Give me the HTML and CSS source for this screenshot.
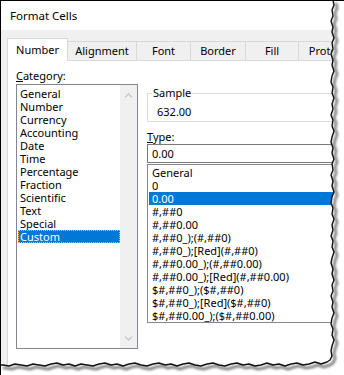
FILE: index.html
```html
<html>
<head>
<link rel="stylesheet" href="styles.css">
<title>Format Cells</title>
</head>
<body>
<div class="window">
  <div class="titlebar">Format Cells</div>
  <div class="tabs">
    <div class="tab active w-number">Number</div>
    <div class="tab w-align">Alignment</div>
    <div class="tab w-font">Font</div>
    <div class="tab w-border">Border</div>
    <div class="tab w-fill">Fill</div>
    <div class="tab w-prot">Protection</div>
  </div>
  <div class="page">
    <div class="left">
      <div class="label"><u>C</u>ategory:</div>
      <div class="listbox category">
        <div class="items">
          <div class="item">General</div>
          <div class="item">Number</div>
          <div class="item">Currency</div>
          <div class="item">Accounting</div>
          <div class="item">Date</div>
          <div class="item">Time</div>
          <div class="item">Percentage</div>
          <div class="item">Fraction</div>
          <div class="item">Scientific</div>
          <div class="item">Text</div>
          <div class="item">Special</div>
          <div class="item sel focus">Custom</div>
        </div>
        <div class="scrollbar">
          <svg width="9" height="5" viewBox="0 0 9 5"><polyline points="1,4.5 4.5,1 8,4.5" fill="none" stroke="#c8c8c8" stroke-width="1.3"/></svg>
          <svg width="9" height="5" viewBox="0 0 9 5"><polyline points="1,0.5 4.5,4 8,0.5" fill="none" stroke="#c8c8c8" stroke-width="1.3"/></svg>
        </div>
      </div>
    </div>
    <div class="right">
      <fieldset class="sample">
        <legend>Sample</legend>
        <div class="sample-value">632.00</div>
      </fieldset>
      <div class="type-label"><u>T</u>ype:</div>
      <div class="textbox">0.00</div>
      <div class="listbox formats">
        <div class="item">General</div>
        <div class="item">0</div>
        <div class="item sel">0.00</div>
        <div class="item">#,##0</div>
        <div class="item">#,##0.00</div>
        <div class="item">#,##0_);(#,##0)</div>
        <div class="item">#,##0_);[Red](#,##0)</div>
        <div class="item">#,##0.00_);(#,##0.00)</div>
        <div class="item">#,##0.00_);[Red](#,##0.00)</div>
        <div class="item">$#,##0_);($#,##0)</div>
        <div class="item">$#,##0_);[Red]($#,##0)</div>
        <div class="item">$#,##0.00_);($#,##0.00)</div>
      </div>
    </div>
  </div>

  <!-- torn paper edge laid over the right and bottom of the dialog -->
  <svg class="torn" width="344" height="375" viewBox="0 0 344 375">
    <defs>
      <filter id="soft" x="-10%" y="-10%" width="120%" height="120%"><feGaussianBlur stdDeviation="1.3"/></filter>
    </defs>
    <path fill="#fff" d="M333,0 L334,5 332,10 333,16 331,21 333,27 332,32 334,38 332,43 333,49 331,54 333,60 332,65 334,71 332,76 331,82 333,87 332,93 334,98 332,104 333,109 331,115 333,120 332,126 334,131 332,137 331,142 333,148 332,153 334,159 332,164 333,170 331,175 333,181 332,186 334,192 332,197 331,203 333,208 332,214 334,219 332,225 333,230 331,236 333,241 332,247 334,252 332,258 331,263 333,269 332,274 334,280 332,285 333,291 331,296 333,302 332,307 334,313 332,318 331,324 333,329 332,335 334,340 332,346 331,351 332,356 330,360 327,362 321,364 315,362 309,364 303,365 297,363 291,364 285,366 279,364 273,365 267,363 261,365 255,366 249,364 243,365 237,363 231,364 225,366 219,365 213,363 207,364 201,366 195,365 189,363 183,364 177,366 171,364 165,365 159,363 153,364 147,366 141,365 135,363 129,364 123,366 117,364 111,365 105,363 99,364 93,366 87,365 81,364 75,366 69,364 63,365 57,363 51,364 45,366 39,365 33,364 27,366 21,365 15,364 9,366 3,365 0,365 L0,375 L344,375 L344,0 Z"/>
    <g fill="none" stroke-linejoin="round">
      <polyline class="edge-shadow" filter="url(#soft)" transform="translate(3,3)" points="333,0 334,5 332,10 333,16 331,21 333,27 332,32 334,38 332,43 333,49 331,54 333,60 332,65 334,71 332,76 331,82 333,87 332,93 334,98 332,104 333,109 331,115 333,120 332,126 334,131 332,137 331,142 333,148 332,153 334,159 332,164 333,170 331,175 333,181 332,186 334,192 332,197 331,203 333,208 332,214 334,219 332,225 333,230 331,236 333,241 332,247 334,252 332,258 331,263 333,269 332,274 334,280 332,285 333,291 331,296 333,302 332,307 334,313 332,318 331,324 333,329 332,335 334,340 332,346 331,351 332,356 330,360 327,362 321,364 315,362 309,364 303,365 297,363 291,364 285,366 279,364 273,365 267,363 261,365 255,366 249,364 243,365 237,363 231,364 225,366 219,365 213,363 207,364 201,366 195,365 189,363 183,364 177,366 171,364 165,365 159,363 153,364 147,366 141,365 135,363 129,364 123,366 117,364 111,365 105,363 99,364 93,366 87,365 81,364 75,366 69,364 63,365 57,363 51,364 45,366 39,365 33,364 27,366 21,365 15,364 9,366 3,365 0,365"/>
      <polyline class="edge" points="333,0 334,5 332,10 333,16 331,21 333,27 332,32 334,38 332,43 333,49 331,54 333,60 332,65 334,71 332,76 331,82 333,87 332,93 334,98 332,104 333,109 331,115 333,120 332,126 334,131 332,137 331,142 333,148 332,153 334,159 332,164 333,170 331,175 333,181 332,186 334,192 332,197 331,203 333,208 332,214 334,219 332,225 333,230 331,236 333,241 332,247 334,252 332,258 331,263 333,269 332,274 334,280 332,285 333,291 331,296 333,302 332,307 334,313 332,318 331,324 333,329 332,335 334,340 332,346 331,351 332,356 330,360 327,362 321,364 315,362 309,364 303,365 297,363 291,364 285,366 279,364 273,365 267,363 261,365 255,366 249,364 243,365 237,363 231,364 225,366 219,365 213,363 207,364 201,366 195,365 189,363 183,364 177,366 171,364 165,365 159,363 153,364 147,366 141,365 135,363 129,364 123,366 117,364 111,365 105,363 99,364 93,366 87,365 81,364 75,366 69,364 63,365 57,363 51,364 45,366 39,365 33,364 27,366 21,365 15,364 9,366 3,365 0,365"/>
    </g>
  </svg>
</div>
</body>
</html>
```

FILE: styles.css
```css
body {
  margin: 0;
  background: #fff;
  color: #000;
  font-family: "Noto Sans", "Open Sans", sans-serif;
  font-size: 11px;
}

.window {
  position: relative;
  width: 344px;
  height: 375px;
  box-sizing: border-box;
  overflow: hidden;
  background: #f0f0f0;
  border-top: 1px solid #000;
  border-left: 1px solid #000;
}

.titlebar {
  height: 29px;
  line-height: 29px;
  padding-left: 9px;
  background: #fff;
  font-size: 11.5px;
}

/* tab strip */
.tabs {
  display: flex;
  align-items: flex-end;
  height: 22px;
  margin: 8px 0 0 6px;
}
.tab {
  flex: none;
  box-sizing: border-box;
  height: 19px;
  line-height: 18px;
  margin-left: -1px;
  text-align: center;
  white-space: nowrap;
  background: #f0f0f0;
  border: 1px solid #d9d9d9;
  border-bottom: 0;
}
.tab.active {
  position: relative;
  z-index: 1;
  height: 23px;
  line-height: 22px;
  margin-left: 0;
  margin-bottom: -1px;
  background: #fff;
}
.w-number { width: 61px; }
.w-align { width: 70px; }
.w-font { width: 55px; }
.w-border { width: 56px; }
.w-fill { width: 54px; }
.w-prot { width: 75px; }

/* tab page */
.page {
  display: grid;
  grid-template-columns: 122px 200px;
  column-gap: 9px;
  align-items: start;
  height: 400px;
  margin-left: 6px;
  padding: 7px 0 0 8px;
  background: #fff;
  border-top: 1px solid #d9d9d9;
  border-left: 1px solid #d9d9d9;
}

.label {
  line-height: 16px;
}

.listbox {
  box-sizing: border-box;
  border: 1px solid #828790;
  background: #fff;
  overflow: hidden;
}
.category {
  display: flex;
  height: 265px;
}
.category .items {
  flex: 1;
  padding: 2px 0 0 1px;
}
.item {
  height: 13px;
  line-height: 13px;
  padding-left: 2px;
  white-space: nowrap;
}
.item.sel {
  background: #0078d7;
  color: #fff;
}
.item.focus {
  outline: 1px dotted #f2b36b;
  outline-offset: -1px;
}

.scrollbar {
  width: 17px;
  display: flex;
  flex-direction: column;
  justify-content: space-between;
  align-items: center;
  padding: 8px 0 7px;
  background: #f0f0f0;
}

/* right column */
.sample {
  margin: 18px 0 0;
  padding: 5px 0 3px 4px;
  border: 1px solid #dcdcdc;
}
.sample legend {
  padding: 0 1px;
  line-height: 14px;
}
.sample-value {
  line-height: 13px;
  padding-left: 5px;
}

.type-label {
  margin-top: 8px;
  line-height: 14px;
}

.textbox {
  box-sizing: border-box;
  height: 19px;
  line-height: 17px;
  padding-left: 4px;
  border: 1px solid #7a7a7a;
}

.formats {
  height: 159px;
  margin-top: 1px;
  padding: 1px 0 0 1px;
}
.formats .item {
  padding-left: 3px;
}

.torn {
  position: absolute;
  top: -1px;
  left: -1px;
  pointer-events: none;
}
.edge {
  stroke: #111;
  stroke-width: 1.4;
}
.edge-shadow {
  stroke: #8a8a8a;
  stroke-width: 3;
}
```
